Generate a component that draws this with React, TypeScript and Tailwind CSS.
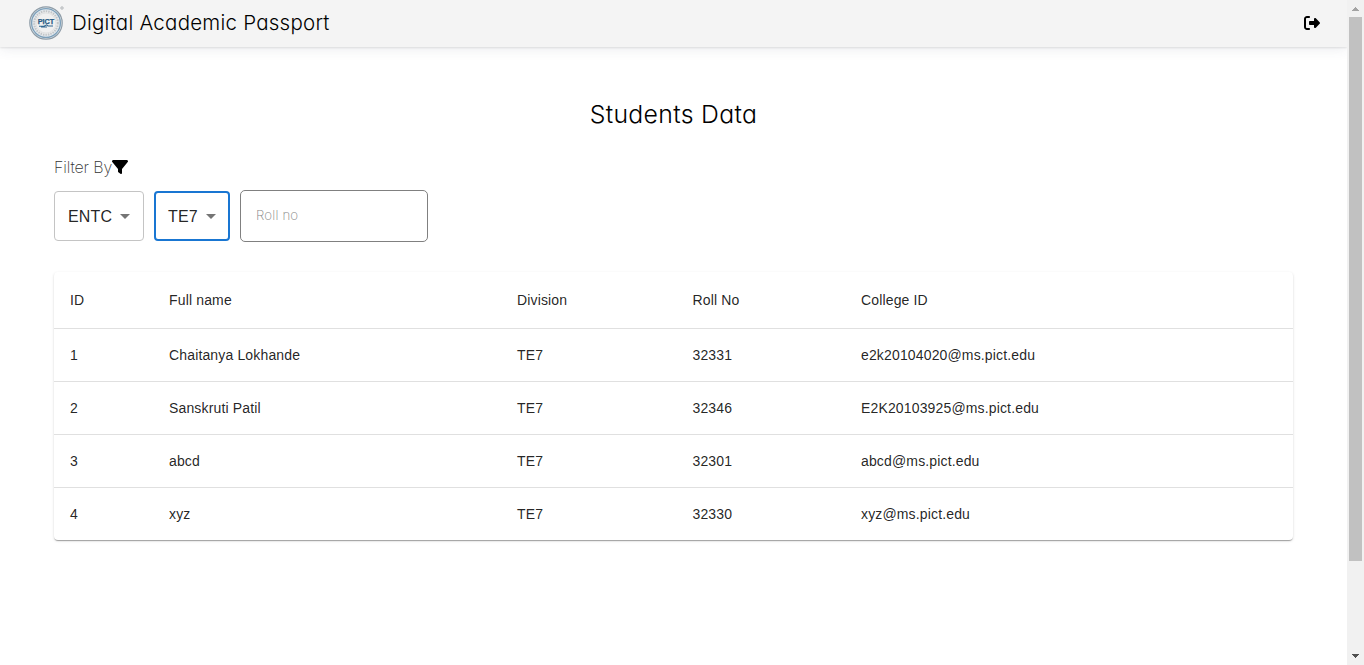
import React from "react";
import { FaFilter, FaRightFromBracket } from "react-icons/fa6";

const brand = "font-['Inter',sans-serif] [font-feature-settings:'cv11'] [font-optical-sizing:none]";

const students = [
  { id: 1, name: "Chaitanya Lokhande", division: "TE7", roll: "32331", email: "e2k20104020@ms.pict.edu" },
  { id: 2, name: "Sanskruti Patil", division: "TE7", roll: "32346", email: "E2K20103925@ms.pict.edu" },
  { id: 3, name: "abcd", division: "TE7", roll: "32301", email: "abcd@ms.pict.edu" },
  { id: 4, name: "xyz", division: "TE7", roll: "32330", email: "xyz@ms.pict.edu" },
];

function Logo() {
  return (
    <svg width="36" height="36" viewBox="0 0 36 36" className="shrink-0">
      <circle cx="18" cy="18" r="16.2" fill="#e3e9ee" stroke="#8e9ca7" strokeWidth="1.2" />
      <circle cx="18" cy="18" r="14.4" fill="none" stroke="#7da0ba" strokeWidth="1.3" />
      <circle cx="18" cy="18" r="11.8" fill="#ececec" stroke="#c3c6c8" strokeWidth="2" strokeDasharray="1.5 1" />
      <circle cx="18" cy="18" r="10" fill="#f0f0f0" stroke="#d6d8da" strokeWidth=".6" />
      <text x="18" y="18.8" textAnchor="middle" fontFamily="Liberation Sans, sans-serif" fontWeight="700" fontSize="7.2" textLength="16.5" lengthAdjust="spacingAndGlyphs" fill="#275b85" stroke="#275b85" strokeWidth=".25">PICT</text>
      <path d="M11 21.2h5l2.5-1.4 1.5 1.2h5M13 22h6" stroke="#326790" strokeWidth="1.1" fill="none" />
      <circle cx="34" cy="3" r="1.2" fill="none" stroke="#b0b4b7" strokeWidth="1" />
    </svg>
  );
}

function Caret() {
  return (
    <svg width="10" height="5" viewBox="0 0 10 5" className="shrink-0 fill-[#757575]">
      <path d="M0 0h10L5 5z" />
    </svg>
  );
}

function Cells({ header, values }: { header?: boolean; values: (string | number)[] }) {
  const height = header ? "h-[57px]" : "h-[53px] last:h-[52px] last:border-b-0";
  return (
    <div
      role="row"
      className={`${height} grid grid-cols-[99px_348px_175.5px_168.5px_1fr] items-center border-b border-[#e0e0e0] pl-4 text-sm tracking-[0.15px] text-black/87`}
    >
      {values.map((v, i) => (
        <span role={header ? "columnheader" : "cell"} key={i}>{v}</span>
      ))}
    </div>
  );
}

function Scrollbar() {
  return (
    <div className="flex h-full w-[17px] shrink-0 flex-col items-center bg-[#f1f1f1]">
      <svg width="17" height="17" viewBox="0 0 17 17" shapeRendering="crispEdges" className="shrink-0">
        <path d="M8 7h1v1h1v1h1v1h1v1H5v-1h1V9h1V8h1z" fill="#a3a3a3" />
      </svg>
      <div className="h-[544px] w-[13px] bg-[#c1c1c1]" />
      <svg width="17" height="17" viewBox="0 0 17 17" shapeRendering="crispEdges" className="mt-auto shrink-0">
        <path d="M5 6h7v1h-1v1h-1v1H9v1H8V9H7V8H6V7H5z" fill="#505050" />
      </svg>
    </div>
  );
}

export default function App() {
  return (
    <div className="flex h-[665px] w-[1364px] overflow-hidden bg-white font-['Liberation_Sans',Arial,sans-serif] text-black">
      <div className="min-w-0 flex-1">
        <header className="flex h-[47px] items-center bg-[#f4f4f4] pr-[27px] pb-px pl-7 shadow-[0_1px_2px_rgba(0,0,0,0.1),0_2px_12px_rgba(60,64,100,0.1)]">
          <Logo />
          <span className={`${brand} ml-2 text-[20.5px] leading-none font-light tracking-[0.24px] whitespace-nowrap`}>Digital Academic Passport</span>
          <button aria-label="Log out" className="ml-auto">
            <FaRightFromBracket size={16} />
          </button>
        </header>

        <main className="px-[54px] pt-[49px]">
          <h1 className={`${brand} text-center text-[24.8px] leading-9 font-light tracking-[0.33px]`}>Students Data</h1>

          <div className="mt-[23px] flex h-6 items-center">
            <span className={`${brand} text-[16px] font-extralight tracking-[-0.15px] text-[#333]`}>Filter By</span>
            <FaFilter size={16} />
          </div>

          <div className="mt-[11px] flex h-[52px] items-center gap-[10px] text-base tracking-[0.15px] text-black/87">
            <button className="flex h-[50px] w-[90px] items-center justify-between rounded border border-[#c4c4c4] px-[13px]">
              <span className="pt-0.5">ENTC</span>
              <Caret />
            </button>
            <button className="flex h-[50px] w-[76px] items-center justify-between rounded border-2 border-[#1976d2] px-3">
              <span className="pt-0.5">TE7</span>
              <Caret />
            </button>
            <input
              placeholder="Roll no"
              className={`${brand} h-[52px] w-[188px] rounded-[5px] border border-[#808080] px-[15px] pb-0.5 text-[13.3px] font-extralight placeholder:text-[#858585]`}
            />
          </div>

          <div
            role="table"
            className="mt-[30px] w-[1239px] overflow-hidden rounded bg-white shadow-[0_2px_1px_-1px_rgba(0,0,0,0.2),0_1px_1px_0_rgba(0,0,0,0.14),0_1px_3px_0_rgba(0,0,0,0.12)]"
          >
            <Cells header values={["ID", "Full name", "Division", "Roll No", "College ID"]} />
            {students.map((s) => (
              <Cells key={s.id} values={[s.id, s.name, s.division, s.roll, s.email]} />
            ))}
          </div>
        </main>
      </div>
      <Scrollbar />
    </div>
  );
}
